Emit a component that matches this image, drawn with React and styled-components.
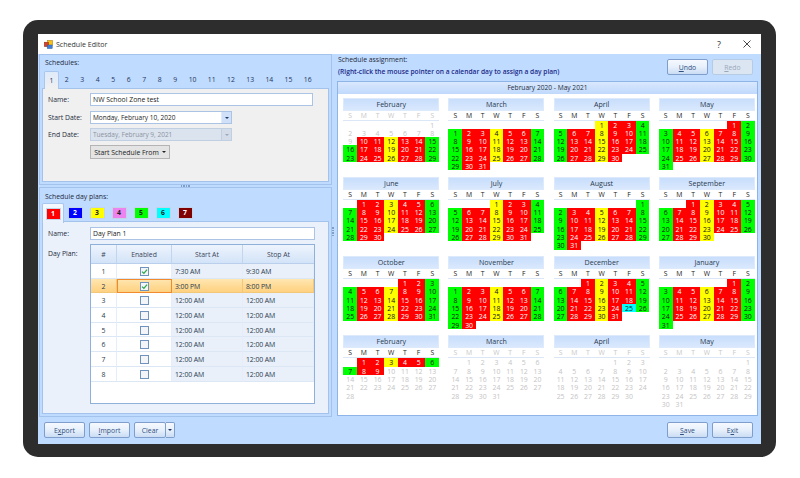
import React from "react";
import styled, { createGlobalStyle, css } from "styled-components";

const Global = createGlobalStyle`
  html, body { margin: 0; padding: 0; background: #fff; }
  body { font-family: "Open Sans", "Noto Sans", sans-serif; font-size: 6.85px; color: #1c1c1c; overflow: hidden; }
  * { box-sizing: border-box; }
`;

const Page = styled.div`
  width: 800px; height: 478px; padding: 20px 24px 21px 23px;
`;
const Frame = styled.div`
  width: 753px; height: 437px; background: #2d2d2d; border-radius: 15px;
  padding: 14px 15px 13px 15px;
`;
const Window = styled.div`
  width: 723px; height: 410px; display: flex; flex-direction: column; background: #bfdbff;
`;
const TitleBar = styled.div`
  height: 20px; flex: none; background: #fff; display: flex; align-items: center; padding: 0 0 0 6px;
`;
const TitleText = styled.span`
  margin-left: 3px; flex: 1; color: #333; font-size: 7.05px;
`;
const TitleAction = styled.span`
  width: 28px; text-align: center; font-size: 9px; color: #333; display: flex; justify-content: center;
`;
const Main = styled.div`
  height: 363px; flex: none; display: flex; background: #bfdbff;
`;
const LeftColumn = styled.div`
  width: 295px; flex: none; display: flex; flex-direction: column; padding-left: 1px;
`;
const Panel = styled.section`
  width: 293px; flex: none; height: ${(p) => p.$h}px; border: 1px solid #a3c2ec; padding: ${(p) => p.$pt}px 2px 2px 2px;
  display: flex; flex-direction: column;
`;
const PanelLabel = styled.div`
  padding-left: 3px; height: 10px; line-height: 10px; color: #1e2a3c; flex: none;
`;
const HSplit = styled.div`
  height: 2px; flex: none; display: flex; justify-content: center; gap: 1px; padding-right: 2px;
`;
const Grip = styled.i`
  width: 1.5px; height: 1.5px; background: #7f9fcb; display: block;
`;
const VSplit = styled.div`
  width: 4px; flex: none; display: flex; flex-direction: column; justify-content: center; gap: 1px; align-items: center;
  margin-left: -2px; padding-bottom: 8px;
`;
const TabStrip = styled.div`
  display: flex; height: 18px; flex: none; margin-top: 3px; padding-left: 2px; position: relative; z-index: 1;
`;
const Tab = styled.div`
  width: ${(p) => p.$w}px; flex: none; text-align: center; line-height: 18px; color: #24365c;
  ${(p) => p.$active && css`
    background: linear-gradient(#dfeafa, #f0f0f0);
    border: 1px solid #a9c6ec; border-bottom: none; border-radius: 2px 2px 0 0;
    line-height: 17px;
  `}
`;
const TabBody = styled.div`
  flex: 1; min-height: 0; background: ${(p) => p.$bg}; border: 1px solid #a3c2ec;
  margin-top: -1px; display: flex; flex-direction: column; padding: ${(p) => p.$pt}px 12px 0 5px;
`;
const FormRow = styled.div`
  display: flex; align-items: center; height: 13px; margin-bottom: ${(p) => p.$mb ?? 5}px;
`;
const FieldLabel = styled.label`
  width: 42px; flex: none; color: #1e2a3c;
`;
const TextInput = styled.div`
  width: ${(p) => p.$w}px; height: 13px; background: ${(p) => (p.$disabled ? "#dbe3ee" : "#fff")};
  border: 1px solid ${(p) => (p.$disabled ? "#c0cfe2" : "#abc4e6")}; display: flex; align-items: center;
  padding-left: 2px; color: ${(p) => (p.$disabled ? "#8b949f" : "#1c1c1c")}; justify-content: space-between;
`;
const DateInput = styled(TextInput)`
  font-size: 6.5px;
`;
const ComboArrow = styled.span`
  width: 10px; height: 11px; background: ${(p) => (p.$disabled ? "#d3dce8" : "#cfe0f8")};
  border-left: 1px solid ${(p) => (p.$disabled ? "#c0cfe2" : "#e0ebfa")}; display: flex; align-items: center; justify-content: center;
`;
const Caret = styled.i`
  width: 0; height: 0; display: block; border-left: 2px solid transparent; border-right: 2px solid transparent;
  border-top: 2px solid ${(p) => p.$c || "#1d3a66"};
`;
const SplitBtn = styled.div`
  width: 80px; height: 14px; margin: 0 0 0 42px; background: #e4e4e4; border: 1px solid #b4b4b4; display: flex;
  align-items: center; justify-content: center; gap: 3px; color: #222;
`;
const SwatchTabs = styled.div`
  display: flex; height: 19px; flex: none; margin-top: 1px; padding-left: 0; position: relative; z-index: 1; align-items: flex-start;
`;
const SwatchTab = styled.div`
  width: 22px; height: ${(p) => (p.$active ? 20 : 19)}px; display: flex; align-items: center; justify-content: center; flex: none;
  ${(p) => p.$active && css`
    background: linear-gradient(#f5f9ff, #eaf1fb); border: 1px solid #a9c6ec; border-bottom: none; border-radius: 2px 2px 0 0;
  `}
`;
const Swatch = styled.div`
  width: 15px; height: 12px; background: ${(p) => p.$bg}; color: ${(p) => p.$fg}; border: 1px solid #c3d3e8;
  text-align: center; line-height: 10px; font-size: 6.8px; font-weight: 700;
`;
const DayPlanRow = styled.div`
  display: flex; margin-top: 0;
`;
const DayLabel = styled(FieldLabel)`
  padding-top: 5px; line-height: 10px;
`;
const PlanGrid = styled.div`
  width: 225px; height: 160px; background: #fff; border: 1px solid #8fb0d8;
`;
const GridCols = styled.div`
  display: grid; grid-template-columns: 26px 55px 71px 1fr;
`;
const HeaderRow = styled(GridCols)`
  height: 19px; background: linear-gradient(#eef4fd, #d3e3f8); border-bottom: 1px solid #b9cfec;
`;
const HeaderCell = styled.div`
  display: flex; align-items: center; justify-content: center; color: #3a4658; border-right: 1px solid #c2d5ee;
  &:last-child { border-right: none; }
`;
const Row = styled(GridCols)`
  height: 14.7px; ${(p) => p.$sel && css`background: linear-gradient(#ffe6b0, #ffcf7c);`}
`;
const Cell = styled.div`
  display: flex; align-items: center; padding: 1px 0 0 ${(p) => (p.$center ? 0 : 3)}px;
  justify-content: ${(p) => (p.$center ? "center" : "flex-start")};
  color: #2a3a4c; font-size: 6.9px; letter-spacing: -0.1px;
  border-right: 1px solid ${(p) => (p.$sel ? "#f2c878" : "#e4edf9")};
  border-bottom: 1px solid ${(p) => (p.$sel ? "#f2c878" : "#dce7f6")};
  background: ${(p) => (p.$sel ? "transparent" : p.$tint ? "#e9f0fa" : "#fff")};
  ${(p) => p.$focus && css`border: 1px solid #f08a2c;`}
`;
const Check = styled.span`
  width: 9px; height: 9px; border: 1px solid #6f93bd; background: #f3f5f8; display: flex; align-items: center; justify-content: center;
`;
const Right = styled.div`
  flex: 1; min-width: 0; display: flex; flex-direction: column; padding: 0 3px 0 3px;
`;
const RightHead = styled.div`
  height: 27px; flex: none; display: flex; justify-content: space-between; padding: 0 5px 0 0;
`;
const AssignTitle = styled.div`
  line-height: 12px; color: #1e2a3c;
`;
const AssignHint = styled.div`
  line-height: 12px; color: #1d2a88; font-weight: 600; font-size: 6.65px;
`;
const BtnRow = styled.div`
  display: flex; gap: 4px; padding-top: 5px;
`;
const Btn = styled.div`
  width: ${(p) => p.$w || 41}px; height: 16px; border: 1px solid ${(p) => (p.$off ? "#b6cbe6" : "#7f9ecb")}; border-radius: 2px;
  background: ${(p) => (p.$off ? "#dce6f3" : "linear-gradient(#f6f9fe 0%, #e7f0fb 50%, #cadcf4 100%)")};
  color: ${(p) => (p.$off ? "#9aa8ba" : "#30507f")}; display: flex; align-items: center; justify-content: center; flex: none;
  u { text-decoration: underline; }
`;
const CalBox = styled.div`
  width: 421px; height: 335px; flex: none; margin-left: -1px; border: 1px solid #8fb5e8; background: #fff; display: flex; flex-direction: column;
`;
const CalTitle = styled.div`
  height: 12px; flex: none; background: linear-gradient(#d9e8fd, #c0d9fc); text-align: center; line-height: 12px; color: #26303e; font-size: 6.65px;
`;
const Months = styled.div`
  display: grid; grid-template-columns: repeat(4, 96px); column-gap: 9.2px; grid-auto-rows: 79.3px; padding: 3.5px 0 0 5.3px;
`;
const MonthHead = styled.div`
  height: 13px; background: linear-gradient(#c8defc, #d9e8fd); border: 1px solid #dceafc; text-align: center; line-height: 11px; color: #2a3a50; font-size: 7.1px;
`;
const Dow = styled.div`
  display: grid; grid-template-columns: repeat(7, 13.7px); height: 10px; border-bottom: 1px solid #dbe7f7; line-height: 9px;
  color: ${(p) => (p.$dim ? "#c8c8c8" : "#222")}; text-align: center; font-size: 6.8px;
`;
const Days = styled.div`
  display: grid; grid-template-columns: repeat(7, 13.7px); grid-auto-rows: 8.33px;
`;
const TONES = {
  red: ["#ff0000", "#fff"],
  green: ["#00ff00", "#111"],
  yellow: ["#ffff00", "#111"],
  cyan: ["#00ffff", "#111"],
  none: ["transparent", "#c4c4c4"],
};
const Day = styled.div`
  background: ${(p) => TONES[p.$tone][0]}; color: ${(p) => TONES[p.$tone][1]};
  text-align: center; line-height: 9px; font-size: 6.9px; letter-spacing: -0.05px;
`;
const Footer = styled.div`
  flex: 1; display: flex; justify-content: space-between; padding: 5px 8px 0 6px;
`;
const BtnGroup = styled.div`
  display: flex; gap: 4px;
`;
const DropBtn = styled(Btn)`
  margin-left: -4px; border-radius: 0 2px 2px 0; border-left: none;
`;

const MONTHS = [
  [2020, 1], [2020, 2], [2020, 3], [2020, 4], [2020, 5], [2020, 6], [2020, 7], [2020, 8],
  [2020, 9], [2020, 10], [2020, 11], [2021, 0], [2021, 1], [2021, 2], [2021, 3], [2021, 4],
];
const NAMES = ["January","February","March","April","May","June","July","August","September","October","November","December"];
const START = new Date(2020, 1, 10).getTime();
const END = new Date(2021, 1, 9).getTime();
const toneOf = (y, m, d) => {
  const dt = new Date(y, m, d);
  if (dt.getTime() < START || dt.getTime() > END) return "none";
  if (y === 2020 && m === 11 && d === 25) return "cyan";
  const w = dt.getDay();
  if (w === 0 || w === 6) return "green";
  return w === 3 ? "yellow" : "red";
};

function Month({ y, m }) {
  const first = new Date(y, m, 1).getDay();
  const lead = first === 0 ? 7 : first;
  const count = new Date(y, m + 1, 0).getDate();
  const dim = (y === 2020 && m === 1) || (y === 2021 && m > 1);
  return (
    <div>
      <MonthHead>{NAMES[m]}</MonthHead>
      <Dow $dim={dim}>{["S","M","T","W","T","F","S"].map((d, i) => <span key={i}>{d}</span>)}</Dow>
      <Days>
        {Array.from({ length: lead }, (_, i) => <Day key={"b" + i} $tone="none" />)}
        {Array.from({ length: count }, (_, i) => (
          <Day key={i} $tone={toneOf(y, m, i + 1)}>{i + 1}</Day>
        ))}
      </Days>
    </div>
  );
}

const CheckMark = () => (
  <svg width="7" height="7" viewBox="0 0 7 7"><path d="M1 3.6 L2.9 5.4 L6 1.6" fill="none" stroke="#2fa84a" strokeWidth="1.3" /></svg>
);
const AppIcon = () => (
  <svg width="9" height="9" viewBox="0 0 9 9">
    <rect x="3.5" y="0.3" width="5.2" height="5" fill="#f5c21b" stroke="#a8761a" strokeWidth="0.5" />
    <rect x="0.3" y="2.2" width="4.2" height="4.4" fill="#d8402a" stroke="#8a2a1a" strokeWidth="0.5" />
    <rect x="3.2" y="5" width="5" height="3.5" fill="#3f7fd8" stroke="#2a5aa0" strokeWidth="0.5" />
  </svg>
);
const CloseIcon = () => (
  <svg width="8" height="8" viewBox="0 0 8 8"><path d="M0.5 0.5 L7.5 7.5 M7.5 0.5 L0.5 7.5" stroke="#333" strokeWidth="0.9" /></svg>
);

const PLANS = [
  ["#ff0000", "#fff"], ["#0000ff", "#fff"], ["#ffff00", "#222"], ["#ee82ee", "#222"],
  ["#00ff00", "#222"], ["#00ffff", "#222"], ["#800000", "#fff"],
];
const ROWS = [
  [1, true, "7:30 AM", "9:30 AM"], [2, true, "3:00 PM", "8:00 PM"],
  ...[3, 4, 5, 6, 7, 8].map((n) => [n, false, "12:00 AM", "12:00 AM"]),
];

export default function App() {
  return (
    <Page>
      <Global />
      <Frame>
        <Window>
          <TitleBar>
            <AppIcon />
            <TitleText>Schedule Editor</TitleText>
            <TitleAction>?</TitleAction>
            <TitleAction><CloseIcon /></TitleAction>
          </TitleBar>
          <Main>
            <LeftColumn>
              <Panel $h={131} $pt={3}>
                <PanelLabel>Schedules:</PanelLabel>
                <TabStrip>
                  {Array.from({ length: 16 }, (_, i) => (
                    <Tab key={i} $active={i === 0} $w={i === 0 ? 15 : i < 9 ? 15.5 : 19.2}>{i + 1}</Tab>
                  ))}
                </TabStrip>
                <TabBody $bg="#f0f0f0" $pt={4}>
                  <FormRow><FieldLabel>Name:</FieldLabel><TextInput $w={223}>NW School Zone test</TextInput></FormRow>
                  <FormRow $mb={4}>
                    <FieldLabel>Start Date:</FieldLabel>
                    <DateInput $w={142}>Monday, February 10, 2020<ComboArrow><Caret /></ComboArrow></DateInput>
                  </FormRow>
                  <FormRow $mb={4}>
                    <FieldLabel>End Date:</FieldLabel>
                    <DateInput $w={142} $disabled>Tuesday, February 9, 2021<ComboArrow $disabled><Caret $c="#9aa8ba" /></ComboArrow></DateInput>
                  </FormRow>
                  <SplitBtn>Start Schedule From <Caret $c="#222" /></SplitBtn>
                </TabBody>
              </Panel>
              <HSplit><Grip /><Grip /><Grip /><Grip /></HSplit>
              <Panel $h={230} $pt={4}>
                <PanelLabel>Schedule day plans:</PanelLabel>
                <SwatchTabs>
                  {PLANS.map(([bg, fg], i) => (
                    <SwatchTab key={i} $active={i === 0}><Swatch $bg={bg} $fg={fg}>{i + 1}</Swatch></SwatchTab>
                  ))}
                </SwatchTabs>
                <TabBody $bg="#eaf1fb" $pt={5}>
                  <FormRow $mb={4}><FieldLabel>Name:</FieldLabel><TextInput $w={225}>Day Plan 1</TextInput></FormRow>
                  <DayPlanRow>
                    <DayLabel>Day Plan:</DayLabel>
                    <PlanGrid>
                      <HeaderRow>
                        <HeaderCell>#</HeaderCell><HeaderCell>Enabled</HeaderCell>
                        <HeaderCell>Start At</HeaderCell><HeaderCell>Stop At</HeaderCell>
                      </HeaderRow>
                      {ROWS.map(([n, on, a, b]) => {
                        const sel = n === 2;
                        return (
                          <Row key={n} $sel={sel}>
                            <Cell $center $sel={sel}>{n}</Cell>
                            <Cell $center $sel={sel} $focus={sel}><Check>{on && <CheckMark />}</Check></Cell>
                            <Cell $tint $sel={sel}>{a}</Cell>
                            <Cell $tint $sel={sel}>{b}</Cell>
                          </Row>
                        );
                      })}
                    </PlanGrid>
                  </DayPlanRow>
                </TabBody>
              </Panel>
            </LeftColumn>
            <VSplit><Grip /><Grip /><Grip /><Grip /></VSplit>
            <Right>
              <RightHead>
                <div>
                  <AssignTitle>Schedule assignment:</AssignTitle>
                  <AssignHint>(Right-click the mouse pointer on a calendar day to assign a day plan)</AssignHint>
                </div>
                <BtnRow>
                  <Btn><span><u>U</u>ndo</span></Btn>
                  <Btn $off><span><u>R</u>edo</span></Btn>
                </BtnRow>
              </RightHead>
              <CalBox>
                <CalTitle>February 2020 - May 2021</CalTitle>
                <Months>
                  {MONTHS.map(([y, m]) => <Month key={y + "-" + m} y={y} m={m} />)}
                </Months>
              </CalBox>
            </Right>
          </Main>
          <Footer>
            <BtnGroup>
              <Btn><span>E<u>x</u>port</span></Btn>
              <Btn><span><u>I</u>mport</span></Btn>
              <Btn $w={32}>Clear</Btn>
              <DropBtn $w={9}><Caret /></DropBtn>
            </BtnGroup>
            <BtnGroup>
              <Btn><span><u>S</u>ave</span></Btn>
              <Btn><span>E<u>x</u>it</span></Btn>
            </BtnGroup>
          </Footer>
        </Window>
      </Frame>
    </Page>
  );
}
